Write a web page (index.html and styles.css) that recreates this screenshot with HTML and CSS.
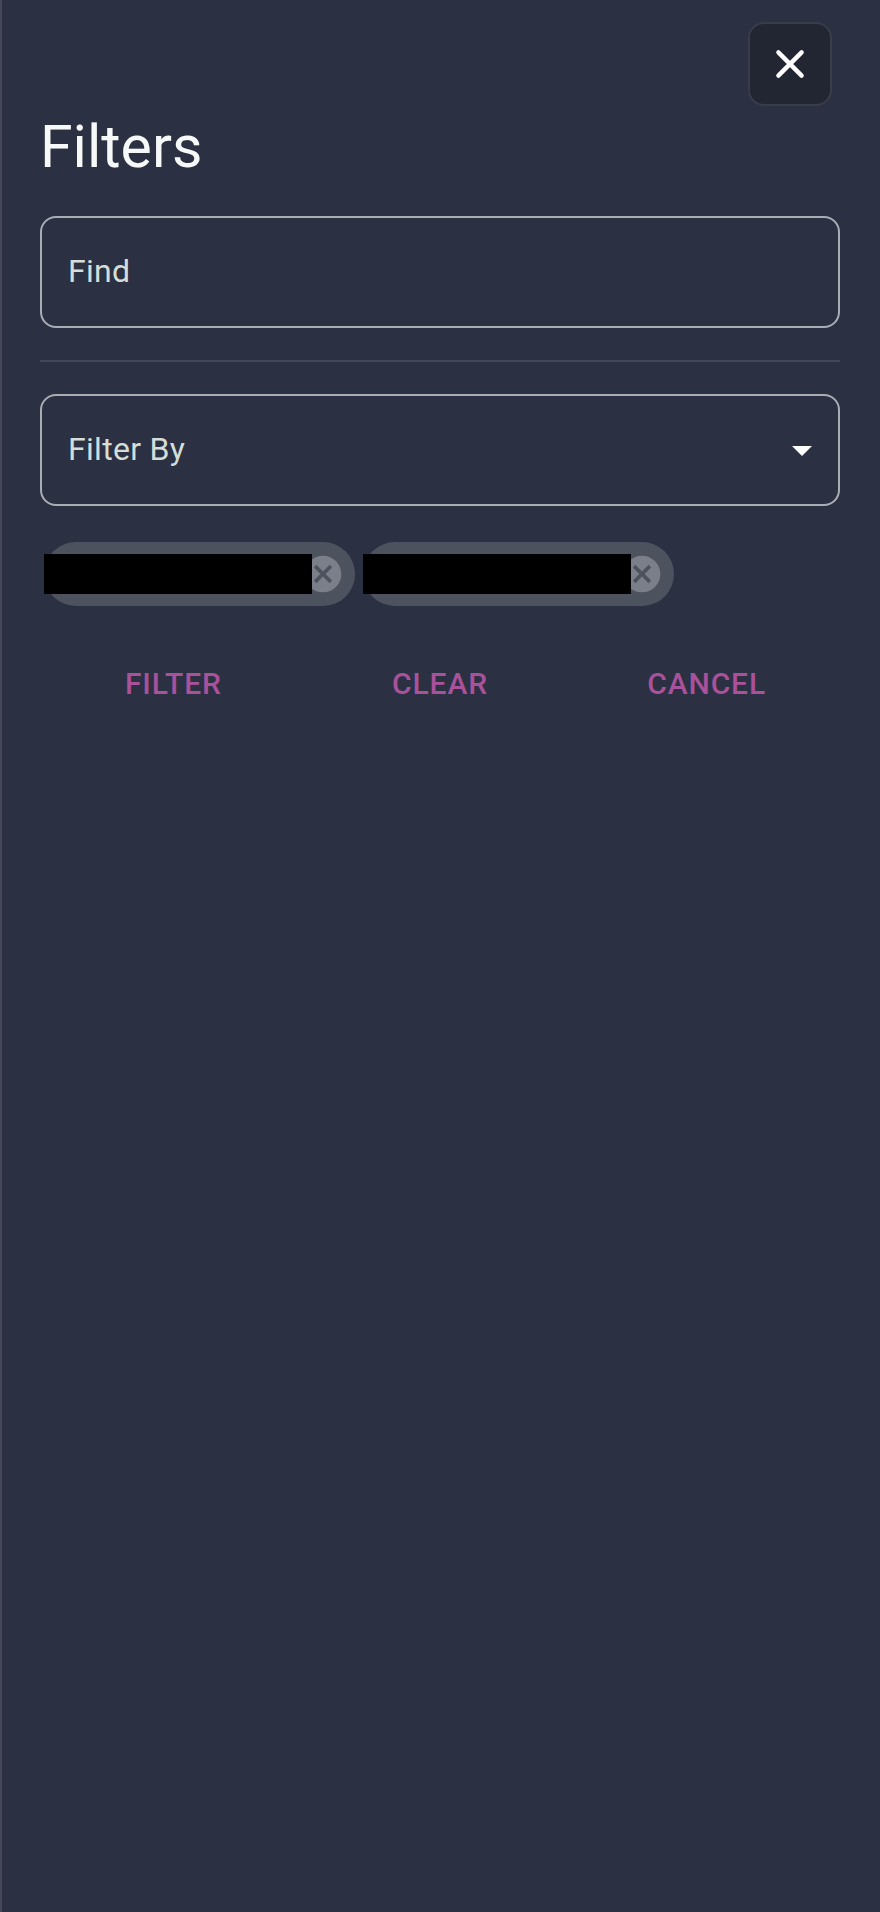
FILE: index.html
```html
<!DOCTYPE html>
<html lang="en">
<head>
<meta charset="utf-8">
<title>Filters</title>
<link rel="stylesheet" href="styles.css">
</head>
<body>
<aside class="drawer">
  <header class="drawer-top">
    <button class="close" aria-label="Close">
      <svg width="32" height="32" viewBox="0 0 32 32"><path d="M4.4 4.4 27.6 27.6M27.6 4.4 4.4 27.6"/></svg>
    </button>
  </header>
  <h1 class="title">Filters</h1>
  <div class="field"><span class="label">Find</span></div>
  <hr class="divider">
  <div class="field">
    <span class="label">Filter By</span>
    <svg class="arrow" viewBox="0 0 24 24"><path d="M7 10l5 5 5-5z"/></svg>
  </div>
  <div class="chips">
    <div class="chip">
      <span class="redacted"></span>
      <svg class="remove" viewBox="0 0 24 24"><path d="M12 2C6.47 2 2 6.47 2 12s4.47 10 10 10 10-4.47 10-10S17.53 2 12 2zm5 13.59L15.59 17 12 13.41 8.41 17 7 15.59 10.59 12 7 8.41 8.41 7 12 10.59 15.59 7 17 8.41 13.41 12 17 15.59z"/></svg>
    </div>
    <div class="chip">
      <span class="redacted"></span>
      <svg class="remove" viewBox="0 0 24 24"><path d="M12 2C6.47 2 2 6.47 2 12s4.47 10 10 10 10-4.47 10-10S17.53 2 12 2zm5 13.59L15.59 17 12 13.41 8.41 17 7 15.59 10.59 12 7 8.41 8.41 7 12 10.59 15.59 7 17 8.41 13.41 12 17 15.59z"/></svg>
    </div>
  </div>
  <div class="actions">
    <button class="action">FILTER</button>
    <button class="action">CLEAR</button>
    <button class="action">CANCEL</button>
  </div>
</aside>
</body>
</html>
```
FILE: styles.css
```css
* {
  box-sizing: border-box;
}

body {
  margin: 0;
  background: #2b3042;
  font-family: Roboto, "Liberation Sans", sans-serif;
}

.drawer {
  height: 1912px;
  padding: 22px 40px 0 38px;
  border-left: 2px solid #434759;
}

.drawer-top {
  display: flex;
  justify-content: flex-end;
  padding-right: 8px;
}

.close {
  display: flex;
  align-items: center;
  justify-content: center;
  width: 84px;
  height: 84px;
  padding: 0;
  border: 2px solid #393d4a;
  border-radius: 16px;
  background: #212632;
}

.close svg {
  fill: none;
  stroke: #fff;
  stroke-width: 4.4;
  stroke-linecap: round;
}

.title {
  height: 80px;
  margin: 6px 0 24px;
  color: #f7f9f9;
  font-size: 59px;
  font-weight: 400;
  line-height: 69px;
  letter-spacing: 0;
}

.field {
  display: flex;
  align-items: center;
  justify-content: space-between;
  height: 112px;
  padding: 0 12px 0 26px;
  border: 2px solid #abadb3;
  border-radius: 16px;
}

.label {
  padding-bottom: 2px;
  color: #d5ddd8;
  font-size: 32px;
  line-height: 46px;
  letter-spacing: 0.3px;
}

.arrow {
  width: 48px;
  height: 48px;
  fill: #fff;
}

.divider {
  height: 2px;
  margin: 32px 0;
  border: 0;
  background: #434759;
}

.chips {
  display: flex;
  gap: 8px;
  padding: 36px 4px 0;
}

.chip {
  display: flex;
  align-items: center;
  width: 311px;
  height: 64px;
  border-radius: 32px;
  background: #4d525f;
}

.redacted {
  z-index: 1;
  width: 268px;
  height: 40px;
  background: #000;
}

.remove {
  width: 44px;
  height: 44px;
  margin-left: -11px;
  fill: #7b7f89;
}

.actions {
  display: grid;
  grid-template-columns: repeat(3, 1fr);
  margin-top: 44px;
}

.action {
  height: 68px;
  padding: 0;
  border: 0;
  background: none;
  color: #a9519a;
  font: 500 30px/52px Roboto, "Liberation Sans", sans-serif;
  letter-spacing: 0.857px;
}
```
